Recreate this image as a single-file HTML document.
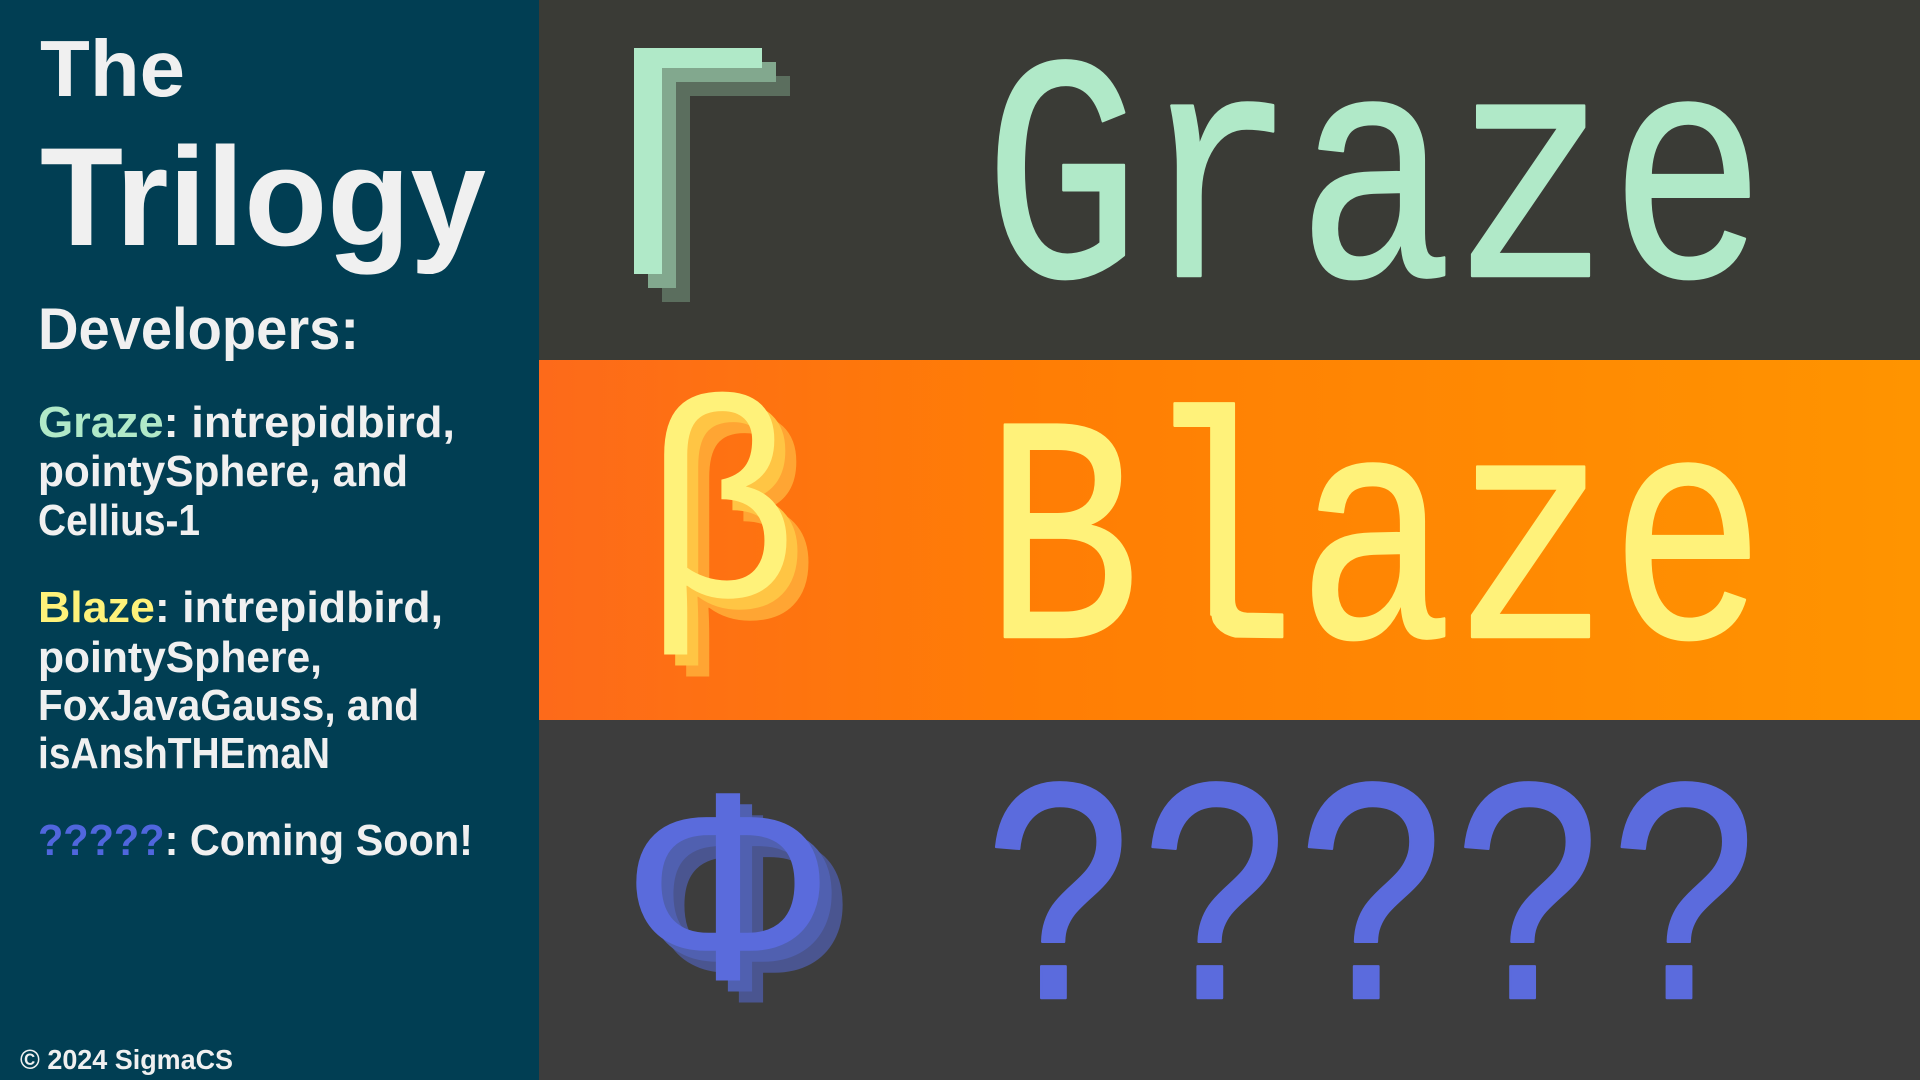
<!DOCTYPE html>
<html><head><meta charset="utf-8"><style>
html,body{margin:0;padding:0;width:1920px;height:1080px;overflow:hidden;background:#3a3b36}
svg{display:block}
.s{font-family:"Liberation Sans",sans-serif;font-weight:bold;fill:#f0f0f0}
.m{font-family:"Liberation Mono",monospace}
</style></head><body>
<svg width="1920" height="1080" viewBox="0 0 1920 1080" xmlns="http://www.w3.org/2000/svg">
<defs>
<linearGradient id="og" x1="0" x2="1" y1="0" y2="0">
<stop offset="0" stop-color="#fd6a1a"/><stop offset="0.35" stop-color="#ff7d05"/><stop offset="1" stop-color="#ff9400"/>
</linearGradient>
</defs>
<rect x="0" y="0" width="539" height="1080" fill="#013e53"/>
<rect x="539" y="0" width="1381" height="360" fill="#3a3b36"/>
<rect x="539" y="360" width="1381" height="360" fill="url(#og)"/>
<rect x="539" y="720" width="1381" height="360" fill="#3d3d3d"/>

<g class="s">
<text x="40" y="96" font-size="80" textLength="145" lengthAdjust="spacingAndGlyphs">The</text>
<text x="40" y="245" font-size="140" textLength="446" lengthAdjust="spacingAndGlyphs">Trilogy</text>
<text x="38" y="349" font-size="58" textLength="321" lengthAdjust="spacingAndGlyphs">Developers:</text>
<g font-size="44">
<text x="38" y="437" textLength="417" lengthAdjust="spacingAndGlyphs"><tspan fill="#b0e9c8">Graze</tspan>: intrepidbird,</text>
<text x="38" y="486" textLength="370" lengthAdjust="spacingAndGlyphs">pointySphere, and</text>
<text x="38" y="535" textLength="162" lengthAdjust="spacingAndGlyphs">Cellius-1</text>
<text x="38" y="622" textLength="405" lengthAdjust="spacingAndGlyphs"><tspan fill="#fff27a">Blaze</tspan>: intrepidbird,</text>
<text x="38" y="672" textLength="284" lengthAdjust="spacingAndGlyphs">pointySphere,</text>
<text x="38" y="720" textLength="381" lengthAdjust="spacingAndGlyphs">FoxJavaGauss, and</text>
<text x="38" y="768" textLength="292" lengthAdjust="spacingAndGlyphs">isAnshTHEmaN</text>
<text x="38" y="855" textLength="435" lengthAdjust="spacingAndGlyphs"><tspan fill="#5066dd">?????</tspan>: Coming Soon!</text>
</g>
<text x="20" y="1069" font-size="28" textLength="213" lengthAdjust="spacingAndGlyphs">© 2024 SigmaCS</text>
</g>

<!-- Gamma -->
<g>
<path d="M662 76h128v20h-100v206h-28z" fill="#5b6e5e"/>
<path d="M648 62h128v20h-100v206h-28z" fill="#82a88e"/>
<path d="M634 48h128v20h-100v206h-28z" fill="#b0e9c8"/>
</g>
<!-- beta -->
<g font-family="Liberation Sans,sans-serif" font-size="282">
<text x="0" y="0" fill="#ffa533" transform="translate(668,618) scale(0.93,1)">β</text>
<text x="0" y="0" fill="#ffc544" transform="translate(657,607) scale(0.93,1)">β</text>
<text x="0" y="0" fill="#fff27a" transform="translate(646,596) scale(0.93,1)">β</text>
</g>
<!-- Phi -->
<g font-family="Liberation Sans,sans-serif" font-size="268">
<text x="644" y="1001" fill="#4a5590">Φ</text>
<text x="633" y="990" fill="#5060b0">Φ</text>
<text x="621" y="979" fill="#5a6bdc">Φ</text>
</g>

<g class="m" font-size="260" stroke-width="2" stroke-linejoin="round">
<text x="0" y="0" fill="#b0e9c8" stroke="#b0e9c8" transform="translate(984,276) scale(1,1.24)" textLength="782" lengthAdjust="spacingAndGlyphs">Graze</text>
<text x="0" y="0" fill="#fff27a" stroke="#fff27a" transform="translate(984,637) scale(1,1.24)" textLength="782" lengthAdjust="spacingAndGlyphs">Blaze</text>
<text x="0" y="0" fill="#5b6bdd" stroke="#5b6bdd" transform="translate(984,998) scale(1,1.24)" textLength="782" lengthAdjust="spacingAndGlyphs">?????</text>
</g>
</svg>
</body></html>
